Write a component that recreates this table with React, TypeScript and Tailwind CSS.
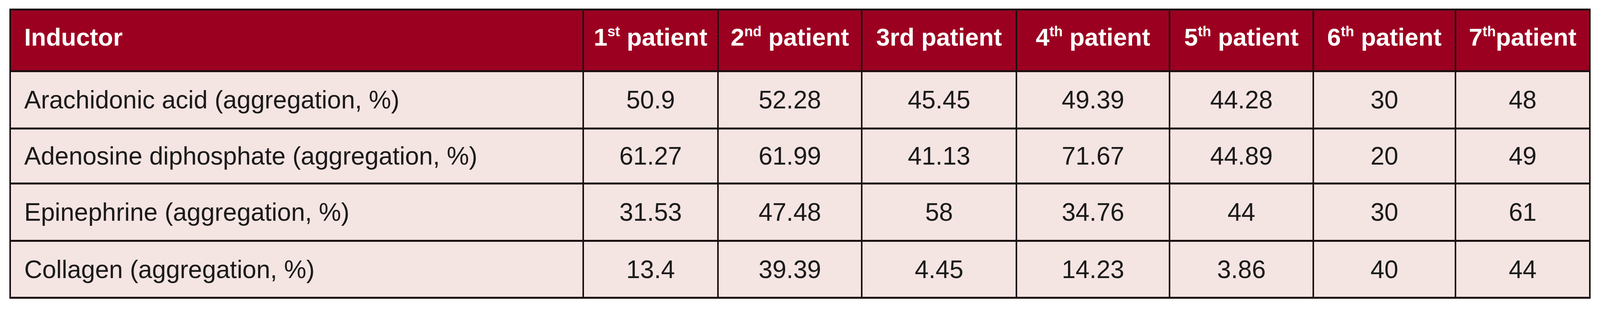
import type { ReactNode } from 'react';

type Patient = { num: string; sup?: string; gap: boolean };

const PATIENTS: Patient[] = [
  { num: '1', sup: 'st', gap: true },
  { num: '2', sup: 'nd', gap: true },
  { num: '3rd', gap: true },
  { num: '4', sup: 'th', gap: true },
  { num: '5', sup: 'th', gap: true },
  { num: '6', sup: 'th', gap: true },
  { num: '7', sup: 'th', gap: false },
];

const ROWS: Array<{ label: string; values: string[] }> = [
  { label: 'Arachidonic acid (aggregation, %)', values: ['50.9', '52.28', '45.45', '49.39', '44.28', '30', '48'] },
  { label: 'Adenosine diphosphate (aggregation, %)', values: ['61.27', '61.99', '41.13', '71.67', '44.89', '20', '49'] },
  { label: 'Epinephrine (aggregation, %)', values: ['31.53', '47.48', '58', '34.76', '44', '30', '61'] },
  { label: 'Collagen (aggregation, %)', values: ['13.4', '39.39', '4.45', '14.23', '3.86', '40', '44'] },
];

function HeadCell({ children, left }: { children: ReactNode; left?: boolean }) {
  return (
    <div
      className={`flex items-center bg-[#9c0021] pb-4 text-[63px] font-bold whitespace-nowrap text-white ${
        left ? 'justify-start pl-[34px]' : 'justify-center'
      }`}
    >
      {children}
    </div>
  );
}

function BodyCell({ children, left }: { children: ReactNode; left?: boolean }) {
  return (
    <div
      className={`flex items-center bg-[#f4e4e2] text-[64px] whitespace-nowrap text-[#1a1a1a] ${
        left ? 'justify-start pl-[34px]' : 'justify-center'
      }`}
    >
      {children}
    </div>
  );
}

function RowCells({ label, values }: { label: string; values: string[] }) {
  return (
    <>
      <BodyCell left>{label}</BodyCell>
      {values.map((v, i) => (
        <BodyCell key={i}>{v}</BodyCell>
      ))}
    </>
  );
}

export default function App() {
  return (
    <div className="min-h-[800px] w-full bg-white pt-[22px] pl-[24px] font-['Liberation_Sans',Arial,sans-serif] leading-none">
      <div className="grid w-max grid-cols-[1463px_341px_364px_392px_388px_364px_360px_340px] grid-rows-[153px_142px_136px_142px_141px] gap-x-[4px] gap-y-[5px] border-x-[4px] border-y-[5px] border-[#1b1010] bg-[#1b1010]">
        <HeadCell left>Inductor</HeadCell>
        {PATIENTS.map((p) => (
          <HeadCell key={p.num}>
            <span>
              {p.num}
              {p.sup && <sup className="top-[-24px] text-[36px]">{p.sup}</sup>}
              {p.gap ? ' ' : ''}patient
            </span>
          </HeadCell>
        ))}
        {ROWS.map((row) => (
          <RowCells key={row.label} label={row.label} values={row.values} />
        ))}
      </div>
    </div>
  );
}
